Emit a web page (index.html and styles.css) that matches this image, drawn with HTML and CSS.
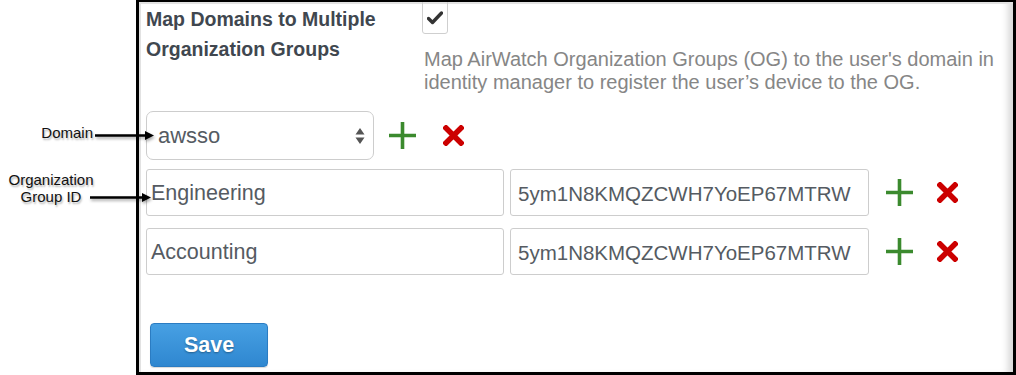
FILE: index.html
```html
<!DOCTYPE html>
<html>
<head>
<meta charset="utf-8">
<link rel="stylesheet" href="styles.css">
</head>
<body>
<div class="page">
  <div class="notes">
    <div class="note note-domain">Domain</div>
    <div class="note note-og">Organization<br>Group ID</div>
  </div>
  <svg class="arrows" width="170" height="375" viewBox="0 0 170 375">
    <defs>
      <filter id="sh" x="-20%" y="-100%" width="140%" height="300%">
        <feDropShadow dx="1" dy="2" stdDeviation="1.5" flood-color="#000" flood-opacity="0.35"/>
      </filter>
    </defs>
    <g filter="url(#sh)" fill="#000" stroke="#000">
      <line x1="95" y1="135.5" x2="146" y2="135.5" stroke-width="2.5"/>
      <path d="M145 131 L154 135.5 L145 140 Z" stroke="none"/>
      <line x1="90" y1="197.5" x2="143" y2="197.5" stroke-width="2.5"/>
      <path d="M142 193 L151 197.5 L142 202 Z" stroke="none"/>
    </g>
  </svg>
  <div class="panel">
    <div class="form">
      <div class="row-top">
        <div class="label">Map Domains to Multiple<br>Organization Groups</div>
        <div class="top-right">
          <div class="checkbox">
            <svg width="16" height="14" viewBox="0 0 16 14"><path d="M1.5 7.5 L5.5 11.5 L14.5 2" fill="none" stroke="#333" stroke-width="3.4" stroke-linecap="round" stroke-linejoin="round"/></svg>
          </div>
          <p class="desc">Map AirWatch Organization Groups (OG) to the user's domain in identity manager to register the user’s device to the OG.</p>
        </div>
      </div>
      <div class="row row-select">
        <div class="select">
          <span>awsso</span>
          <svg class="updown" width="10" height="18" viewBox="0 0 10 18"><path d="M5 1 L9.5 7.5 L0.5 7.5 Z M5 17 L9.5 10.5 L0.5 10.5 Z" fill="#555"/></svg>
        </div>
        <span class="icons">
          <svg class="plus" width="27" height="27" viewBox="0 0 27 27"><path d="M13.5 0 V27 M0 13.5 H27" stroke="#3b8a2e" stroke-width="3.6"/></svg>
          <svg class="cross" width="21" height="21" viewBox="0 0 21 21"><path d="M3 3 L18 18 M18 3 L3 18" stroke="#cc0000" stroke-width="5.5" stroke-linecap="square"/></svg>
        </span>
      </div>
      <div class="row row-first">
        <div class="input wide">Engineering</div>
        <div class="input wide">5ym1N8KMQZCWH7YoEP67MTRW</div>
        <span class="icons">
          <svg class="plus" width="27" height="27" viewBox="0 0 27 27"><path d="M13.5 0 V27 M0 13.5 H27" stroke="#3b8a2e" stroke-width="3.6"/></svg>
          <svg class="cross" width="21" height="21" viewBox="0 0 21 21"><path d="M3 3 L18 18 M18 3 L3 18" stroke="#cc0000" stroke-width="5.5" stroke-linecap="square"/></svg>
        </span>
      </div>
      <div class="row row-second">
        <div class="input wide">Accounting</div>
        <div class="input wide">5ym1N8KMQZCWH7YoEP67MTRW</div>
        <span class="icons">
          <svg class="plus" width="27" height="27" viewBox="0 0 27 27"><path d="M13.5 0 V27 M0 13.5 H27" stroke="#3b8a2e" stroke-width="3.6"/></svg>
          <svg class="cross" width="21" height="21" viewBox="0 0 21 21"><path d="M3 3 L18 18 M18 3 L3 18" stroke="#cc0000" stroke-width="5.5" stroke-linecap="square"/></svg>
        </span>
      </div>
      <div class="actions">
        <button class="save">Save</button>
      </div>
    </div>
  </div>
</div>
</body>
</html>
```
FILE: styles.css
```css
* { box-sizing: border-box; }
html, body { margin: 0; padding: 0; background: #fff; }
body { font-family: "Liberation Sans", Arial, Helvetica, sans-serif; }

.page {
  position: relative;
  display: flex;
  width: 1016px;
  height: 375px;
  overflow: hidden;
}

.notes {
  width: 136px;
  flex: none;
  position: relative;
}
.note {
  position: absolute;
  font-size: 15px;
  line-height: 17px;
  color: #111;
  text-align: center;
  text-shadow: 1px 2px 2px rgba(0,0,0,0.3);
}
.note-domain { right: 43px; top: 124px; }
.note-og { left: 1px; width: 100px; top: 171px; }

.arrows {
  position: absolute;
  left: 0;
  top: 0;
  z-index: 2;
  pointer-events: none;
}

.panel {
  flex: 1;
  height: 375px;
  border-left: 3px solid #000;
  border-top: 2px solid #000;
  border-bottom: 3px solid #000;
  border-right: 3px solid #000;
  box-shadow: inset 2px 2px 0 #e2e2e2, inset -9px 0 7px -4px #d8d8d8;
  overflow: hidden;
}

.form {
  padding-left: 7px;
  padding-right: 8px;
}

.row-top {
  display: flex;
}
.label {
  width: 276px;
  flex: none;
  font-size: 19.5px;
  font-weight: bold;
  line-height: 30px;
  color: #40474f;
  padding-top: 2px;
}
.top-right {
  display: flex;
  flex-direction: column;
}
.checkbox {
  width: 26px;
  height: 38px;
  margin-top: -6px;
  border: 1px solid #cfcfcf;
  border-radius: 3px;
  display: flex;
  align-items: center;
  justify-content: center;
  padding-top: 6px;
}
.desc {
  margin: 14px 0 0 2px;
  font-size: 20px;
  line-height: 23px;
  color: #868686;
}

.row {
  display: flex;
  align-items: center;
  gap: 6px;
}
.row-select { margin-top: 17px; }
.row-first { margin-top: 9px; }
.row-second { margin-top: 12px; }

.select {
  width: 228px;
  height: 49px;
  border: 1px solid #cdcdcd;
  border-radius: 7px;
  display: flex;
  align-items: center;
  justify-content: space-between;
  padding: 0 8px 0 11px;
  font-size: 22px;
  color: #555b62;
}
.updown { margin-top: 1px; }

.input {
  height: 47px;
  border: 1px solid #cdcdcd;
  border-radius: 3px;
  display: flex;
  align-items: center;
  padding: 2px 4px 0;
  font-size: 21.5px;
  color: #555b62;
  white-space: nowrap;
  overflow: hidden;
}
.input.wide:first-child { width: 358px; }
.input.wide:nth-child(2) { width: 359px; padding-left: 7px; font-size: 20.5px; }

.icons {
  display: flex;
  align-items: center;
  margin-left: 11px;
  gap: 24px;
}
.row-select .icons { margin-left: 9px; gap: 27px; }

.actions {
  margin-top: 48px;
  padding-left: 4px;
}
.save {
  width: 118px;
  height: 44px;
  border: 1px solid #2b7cc2;
  border-radius: 4px;
  background: linear-gradient(#47a0e3, #2f87d0);
  color: #fff;
  font-family: "Liberation Sans", Arial, sans-serif;
  font-size: 21.5px;
  font-weight: bold;
  text-shadow: 0 1px 2px rgba(0,0,0,0.35);
  box-shadow: 0 1px 1px rgba(0,0,0,0.15);
  padding: 0;
}
```
